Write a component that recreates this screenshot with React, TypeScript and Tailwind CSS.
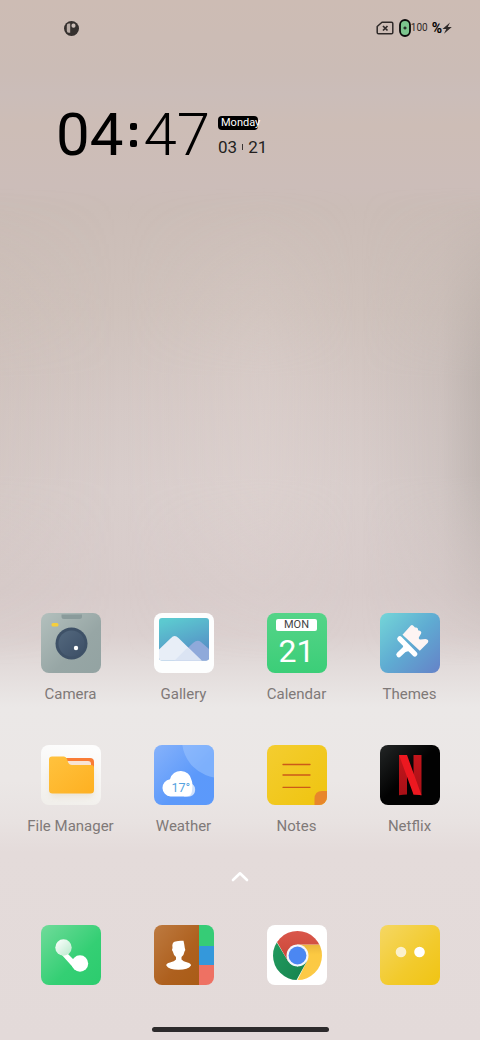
import React from "react";

function CameraIcon() {
  return (
    <svg viewBox="0 0 60 60" className="block size-full">
      <defs>
        <linearGradient id="cam" x1="0" y1="0" x2="1" y2="1">
          <stop offset="0" stopColor="#b3c0bd" />
          <stop offset="0.6" stopColor="#97a6a5" />
          <stop offset="1" stopColor="#93a3a2" />
        </linearGradient>
        <linearGradient id="lens" x1="0" y1="0" x2="1" y2="1">
          <stop offset="0" stopColor="#53687e" />
          <stop offset="1" stopColor="#3c4f66" />
        </linearGradient>
      </defs>
      <rect width="60" height="60" fill="url(#cam)" />
      <path d="M20.500 1.500H41V3.500Q41 6 38.500 6H23Q20.500 6 20.500 3.500Z" fill="#8a9b9b" />
      <rect x="10.500" y="10" width="7" height="3.500" rx="1.500" fill="#f6cf3b" />
      <circle cx="30.500" cy="30.500" r="16" fill="#3e5167" />
      <circle cx="30.500" cy="30.500" r="13" fill="url(#lens)" />
      <circle cx="35" cy="35" r="2.200" fill="#fff" />
    </svg>
  );
}

function GalleryIcon() {
  return (
    <svg viewBox="0 0 60 60" className="block size-full">
      <defs>
        <linearGradient id="sky" x1="0.300" y1="0" x2="0.700" y2="1">
          <stop offset="0" stopColor="#5cc9d0" />
          <stop offset="1" stopColor="#5487c4" />
        </linearGradient>
        <clipPath id="photo">
          <rect x="5" y="5" width="50" height="42.500" rx="3" />
        </clipPath>
      </defs>
      <rect width="60" height="60" fill="#fdfefe" />
      <g clipPath="url(#photo)">
        <rect x="5" y="5" width="50" height="43" fill="url(#sky)" />
        <path d="M18 50 L39 30 Q43.500 26 47 29 L56 37 V50Z" fill="#8fa9da" />
        <path d="M4 37.500 L17 25 Q20.500 21 24.500 25 L48 48 H4Z" fill="#e8eef7" />
        <path d="M20 48 L32 36 Q34 34.500 36 36.500 L48 48Z" fill="#dbe4f3" />
      </g>
    </svg>
  );
}

function CalendarIcon() {
  return (
    <span className="flex size-full flex-col items-center bg-linear-to-b from-[#54d488] to-[#3bce78] pt-[6px]">
      <span className="flex h-3 w-[41px] items-center justify-center rounded-xs bg-white text-[11px] leading-3 text-[#444]">
        MON
      </span>
      <span className="mt-1 text-[32px] font-normal leading-8 text-white">21</span>
    </span>
  );
}

function ThemesIcon() {
  return (
    <svg viewBox="0 0 60 60" className="block size-full">
      <defs>
        <linearGradient id="theme" x1="0" y1="0" x2="1" y2="1">
          <stop offset="0" stopColor="#74d6d8" />
          <stop offset="0.500" stopColor="#5fabd2" />
          <stop offset="1" stopColor="#6582c8" />
        </linearGradient>
      </defs>
      <rect width="60" height="60" fill="url(#theme)" />
      <path
        d="M22.500 21.700 L30.800 12.600 Q32 11.500 33.300 12.700 L35 14.600 Q38.300 14 38 17.300 Q42.300 17.800 41 20.800 L38.800 24.600 Q38.500 26.800 40.500 26.500 L45.500 26 Q49.500 26.800 47.800 29.800 L39.800 37.800Z"
        fill="#fdf4f3"
      />
      <path d="M19.800 25.800L34.800 41M27.500 33.500L18.900 41.700" fill="none" stroke="#fff" strokeWidth="5.200" strokeLinecap="round" />
      <path d="M24 30 L31.500 37.500 L25 39 L22.500 36Z" fill="#fff" />
    </svg>
  );
}

function FilesIcon() {
  return (
    <svg viewBox="0 0 60 60" className="block size-full">
      <defs>
        <linearGradient id="paper" x1="0.600" y1="0" x2="0.400" y2="1">
          <stop offset="0" stopColor="#fdfdfd" />
          <stop offset="1" stopColor="#f1efeb" />
        </linearGradient>
        <linearGradient id="folder" x1="0" y1="0" x2="1" y2="1">
          <stop offset="0" stopColor="#ffc23e" />
          <stop offset="1" stopColor="#feb021" />
        </linearGradient>
        <filter id="soft" x="-30%" y="-30%" width="160%" height="160%">
          <feGaussianBlur stdDeviation="3" />
        </filter>
      </defs>
      <rect width="60" height="60" fill="url(#paper)" />
      <rect x="10" y="22" width="42" height="29" rx="3" fill="#c9a35a" opacity="0.200" filter="url(#soft)" />
      <path d="M22 13 H49 Q53 13 53 17 V28 H22Z" fill="#f97c36" />
      <path d="M24 16 H47 Q50 16 50 19 V23 H24Z" fill="#f8e3d4" />
      <path
        d="M11 11.500 H23 Q25 11.500 26 14 L27 17 Q28 20 31 20 H50 Q53 20 53 23 V45 Q53 48.500 49.500 48.500 H11.500 Q8 48.500 8 45 V14.500 Q8 11.500 11 11.500Z"
        fill="url(#folder)"
      />
    </svg>
  );
}

function WeatherIcon() {
  return (
    <svg viewBox="0 0 60 60" className="block size-full">
      <defs>
        <linearGradient id="weather" x1="0" y1="0" x2="1" y2="1">
          <stop offset="0" stopColor="#86b2fb" />
          <stop offset="0.600" stopColor="#5c99fa" />
          <stop offset="1" stopColor="#5b99fb" />
        </linearGradient>
      </defs>
      <rect width="60" height="60" fill="url(#weather)" />
      <circle cx="66" cy="-5" r="38" fill="#a6cbff" opacity="0.450" />
      <path d="M30 38 H36 A7 7 0 0 1 36 51.500 H30Z" fill="#cfe1fd" />
      <path d="M16.500 51.500 A8.700 8.700 0 0 1 16 34.200 A11 11 0 0 1 37.500 35 Q39 38 38 46 Q37.500 51.500 32 51.500Z" fill="#fff" />
      <text x="17.500" y="46.500" fontSize="12.500" fill="#55a3e0" fontFamily="Roboto, sans-serif">
        17°
      </text>
    </svg>
  );
}

function NotesIcon() {
  return (
    <svg viewBox="0 0 60 60" className="block size-full">
      <defs>
        <linearGradient id="note" x1="0" y1="0" x2="1" y2="1">
          <stop offset="0" stopColor="#f4cd30" />
          <stop offset="1" stopColor="#efc40f" />
        </linearGradient>
      </defs>
      <rect width="60" height="60" fill="url(#note)" />
      <path d="M16 19.500H43M16 30H43M16 42.300H43" stroke="#cc5a18" strokeWidth="1.300" strokeLinecap="round" />
      <path d="M60 46H55Q47.500 46 47.500 54V60H60Z" fill="#e8862b" />
    </svg>
  );
}

function NetflixIcon() {
  return (
    <svg viewBox="0 0 60 60" className="block size-full">
      <defs>
        <linearGradient id="night" x1="0" y1="0" x2="0.800" y2="0.800">
          <stop offset="0" stopColor="#232626" />
          <stop offset="0.600" stopColor="#020202" />
        </linearGradient>
        <linearGradient id="bar" x1="0" y1="0" x2="0" y2="1">
          <stop offset="0" stopColor="#c3151b" />
          <stop offset="1" stopColor="#a81017" />
        </linearGradient>
      </defs>
      <rect width="60" height="60" fill="url(#night)" />
      <path d="M19 10h8v39.500q-4 0-8 .8zM33.500 10h8v40.300q-4-.8-8-.8z" fill="url(#bar)" />
      <path d="M19 10h8l14.500 40.300q-4-.8-8-.8z" fill="#ec1820" />
    </svg>
  );
}

function PhoneIcon() {
  return (
    <svg viewBox="0 0 60 60" className="block size-full">
      <defs>
        <linearGradient id="call" x1="0" y1="0" x2="1" y2="1">
          <stop offset="0" stopColor="#70db9a" />
          <stop offset="0.600" stopColor="#34cf74" />
          <stop offset="1" stopColor="#2ccc6e" />
        </linearGradient>
        <linearGradient id="ear" x1="0" y1="0" x2="1" y2="1">
          <stop offset="0" stopColor="#fff" />
          <stop offset="1" stopColor="#b8e9cb" />
        </linearGradient>
      </defs>
      <rect width="60" height="60" fill="url(#call)" />
      <path d="M20 29 L25 27 L32 34 Q35 34 37 31 L39 46 L33.500 44Z" fill="#fff" />
      <circle cx="22.500" cy="22.500" r="8.200" fill="url(#ear)" />
      <circle cx="39" cy="38.500" r="8.200" fill="#fff" />
    </svg>
  );
}

function ContactsIcon() {
  return (
    <svg viewBox="0 0 60 60" className="block size-full">
      <defs>
        <linearGradient id="leather" x1="0" y1="0" x2="1" y2="1">
          <stop offset="0" stopColor="#bd7a40" />
          <stop offset="0.600" stopColor="#ae601e" />
          <stop offset="1" stopColor="#a95c16" />
        </linearGradient>
      </defs>
      <rect width="46" height="60" fill="url(#leather)" />
      <rect x="45" width="15" height="21" fill="#36cc76" />
      <rect x="45" y="21" width="15" height="19.500" fill="#3498db" />
      <rect x="45" y="40" width="15" height="20" fill="#ee7163" />
      <path
        d="M18.500 23 Q17.500 17 21.500 16.500 Q25 15.300 29.500 15.800 Q30.300 19 30.800 23 Q32 25 30.500 26.500 Q30 30 27.500 32 V34.500 Q29 36.500 33.500 37.500 Q37 38.500 37 40.500 Q34 44.800 24.500 44.800 Q15 44.800 12.300 40.500 Q12 38.500 16 37.500 Q20.500 36.500 22 34.500 V32 Q19.500 30 18.800 26.500 Q17.300 25 18.500 23Z"
        fill="#fff"
      />
    </svg>
  );
}

function ChromeIcon() {
  return (
    <svg viewBox="0 0 60 60" className="block size-full">
      <defs>
        <clipPath id="disc">
          <circle cx="30.500" cy="30.500" r="24.500" />
        </clipPath>
        <linearGradient id="cr" x1="0" y1="0" x2="0" y2="1">
          <stop offset="0" stopColor="#dd5a4e" />
          <stop offset="1" stopColor="#c94638" />
        </linearGradient>
        <linearGradient id="cg" x1="0" y1="0" x2="1" y2="0.600">
          <stop offset="0" stopColor="#249f62" />
          <stop offset="1" stopColor="#188650" />
        </linearGradient>
        <linearGradient id="cy" x1="0" y1="0" x2="0" y2="1">
          <stop offset="0" stopColor="#eab53c" />
          <stop offset="0.250" stopColor="#fcc942" />
          <stop offset="1" stopColor="#fcca48" />
        </linearGradient>
      </defs>
      <rect width="60" height="60" fill="#fff" />
      <g clipPath="url(#disc)">
        <path d="M30.500 19.500H60V60H28L40 36Z" fill="url(#cy)" />
        <path d="M4 8 L21 36 L30.500 41.500 L40 36 L29 56 H0 V8Z" fill="url(#cg)" />
        <path d="M4 8 L10 17 L21 36 L30.500 19.500 H60 V0 H4Z" fill="url(#cr)" />
      </g>
      <circle cx="30.500" cy="30.500" r="11" fill="#f4f6fb" />
      <circle cx="30.500" cy="30.500" r="8.900" fill="#4b87f2" />
    </svg>
  );
}

function MessagesIcon() {
  return (
    <svg viewBox="0 0 60 60" className="block size-full">
      <defs>
        <linearGradient id="msg" x1="0" y1="0" x2="1" y2="1">
          <stop offset="0" stopColor="#f5d763" />
          <stop offset="0.600" stopColor="#f2ca2b" />
          <stop offset="1" stopColor="#f0c413" />
        </linearGradient>
      </defs>
      <rect width="60" height="60" fill="url(#msg)" />
      <circle cx="21" cy="27" r="5.300" fill="#fbf1cd" />
      <circle cx="39.500" cy="27" r="5.300" fill="#fff" />
    </svg>
  );
}

type App = { name: string; icon: React.ReactNode };

const apps: App[] = [
  { name: "Camera", icon: <CameraIcon /> },
  { name: "Gallery", icon: <GalleryIcon /> },
  { name: "Calendar", icon: <CalendarIcon /> },
  { name: "Themes", icon: <ThemesIcon /> },
  { name: "File Manager", icon: <FilesIcon /> },
  { name: "Weather", icon: <WeatherIcon /> },
  { name: "Notes", icon: <NotesIcon /> },
  { name: "Netflix", icon: <NetflixIcon /> },
];

const dock: App[] = [
  { name: "Phone", icon: <PhoneIcon /> },
  { name: "Contacts", icon: <ContactsIcon /> },
  { name: "Chrome", icon: <ChromeIcon /> },
  { name: "Messages", icon: <MessagesIcon /> },
];

function StatusBar() {
  return (
    <header className="flex h-14 items-center justify-between pl-16 pr-7 text-[#2e2928]">
      <svg viewBox="0 0 15 15" className="size-[15px]">
        <circle cx="7.500" cy="7.500" r="7.500" fill="#35302e" />
        <path d="M4.700 2.600 H6.200 V11.800 H4.700 Q2.800 11.800 2.800 9.500 V5 Q2.800 2.600 4.700 2.600Z" fill="#b9aca6" />
        <rect x="7.500" y="2.600" width="4" height="4.200" rx="1.800" fill="#cbbdb7" />
      </svg>
      <div className="flex items-center">
        <svg viewBox="0 0 18 14" className="h-[14px] w-[18px]" fill="none" stroke="currentColor">
          <path d="M6 1.200H15.500Q16.800 1.200 16.800 2.500V11.500Q16.800 12.800 15.500 12.800H2.500Q1.200 12.800 1.200 11.500V5.500Z" strokeWidth="1.500" strokeLinejoin="round" />
          <path d="M7 5l4.500 4.500M11.500 5L7 9.500" strokeWidth="1.700" />
        </svg>
        <svg viewBox="0 0 12 18" className="ml-[5px] h-[18px] w-3">
          <rect x="1" y="1" width="10" height="16" rx="5" fill="#7cc58e" stroke="#0a0a0a" strokeWidth="1.800" />
          <path d="M6 7.500v3M4.500 9h3" stroke="#222" strokeWidth="1.300" />
        </svg>
        <span className="text-[10px] leading-4">100</span>
        <span className="ml-1 text-sm font-bold leading-4 text-black">%</span>
        <svg viewBox="0 0 10 14" className="h-[14px] w-[10px]">
          <path d="M8 1.500L0.500 8H4.300L2 12.800L9.800 6H5.800Z" fill="currentColor" />
        </svg>
      </div>
    </header>
  );
}

function ClockWidget() {
  return (
    <section className="flex items-start pl-14 pt-[50px]">
      <time className="flex items-center text-[60px] leading-[58px] text-black">
        <span className="font-normal">04</span>
        <span className="flex flex-col gap-[10px] pl-[7px] pr-[6px]">
          <span className="size-[7px] rounded-xs bg-black" />
          <span className="size-[7px] rounded-xs bg-black" />
        </span>
        <span className="font-light">47</span>
      </time>
      <div className="ml-2 flex flex-col pt-[10px]">
        <span className="h-[14px] w-10 rounded-sm bg-black pl-[3px] text-[11px] leading-[14px] text-white">Monday</span>
        <span className="mt-[7px] flex items-center gap-[5px] text-[17px] leading-5 text-[#231f1e]">
          <span>03</span>
          <span className="h-[6px] w-px bg-[#3a3433]" />
          <span>21</span>
        </span>
      </div>
    </section>
  );
}

export default function App() {
  return (
    <div className="relative isolate flex min-h-screen flex-col overflow-hidden bg-linear-[180deg,#cdbcb4_0%,#cbbcb6_7%,#cbbdb9_9%,#cdbdb6_12%,#ccbdb9_18%,#cbbdb7_20%,#cfc2bc_30%,#d5c9c6_39%,#d9cecc_47%,#d8cccb_57%,#dbd0cf_61%,#e2dbda_64%,#ebe8e7_68%,#ebe7e6_75%,#e8e2e1_79%,#e4dbda_82%,#e3dad9_100%] font-[Roboto,sans-serif] pb-2">
      <div className="absolute inset-x-0 top-[18%] bottom-[36%] -z-10 mask-y-from-60% bg-linear-[90deg,#c3b4ac30_0%,#c3b4ac00_25%,#e5d9d640_55%,#d8cdca00_75%,#b5aca840_92%,#a39b9670_100%]" />
      <StatusBar />
      <ClockWidget />
      <div className="grow" />
      <main className="grid grid-cols-4 gap-y-[41px] px-[14px]">
        {apps.map((app) => (
          <button key={app.name} type="button" className="flex flex-col items-center gap-[11px]">
            <span className="size-[60px] overflow-hidden rounded-lg">{app.icon}</span>
            <span className="whitespace-nowrap text-[15px] leading-5 text-[#7f7978]">{app.name}</span>
          </button>
        ))}
      </main>
      <button type="button" aria-label="All apps" className="mt-8 self-center">
        <svg viewBox="0 0 18 16" className="h-4 w-[18px]" fill="none">
          <path d="M2 12L9 5.300L16 12" stroke="#fff" strokeWidth="2.600" strokeLinecap="round" strokeLinejoin="round" />
        </svg>
      </button>
      <nav className="mt-[41px] grid grid-cols-4 px-[14px]">
        {dock.map((app) => (
          <button key={app.name} type="button" aria-label={app.name} className="flex justify-center">
            <span className="size-[60px] overflow-hidden rounded-lg">{app.icon}</span>
          </button>
        ))}
      </nav>
      <div className="mt-[42px] h-[5px] w-[177px] self-center rounded-full bg-[#2d2b2c]" />
    </div>
  );
}
